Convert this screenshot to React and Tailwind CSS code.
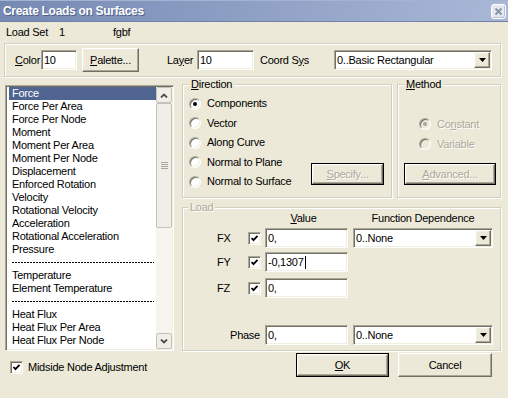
const sunken =
  'border border-[#aca899] border-b-white border-r-white shadow-[inset_1px_1px_0_#716f64,inset_-1px_-1px_0_#f1efe2]'
const raised =
  'border border-white border-b-[#716f64] border-r-[#716f64] shadow-[inset_-1px_-1px_0_#aca899,inset_1px_1px_0_#f1efe2]'
const etched = 'border border-[#d0d0bf] shadow-[inset_1px_1px_0_#fff,1px_1px_0_#fff]'
const grayText = 'text-[#aca899] [text-shadow:1px_1px_0_#fff]'

const loadTypes = [
  'Force',
  'Force Per Area',
  'Force Per Node',
  'Moment',
  'Moment Per Area',
  'Moment Per Node',
  'Displacement',
  'Enforced Rotation',
  'Velocity',
  'Rotational Velocity',
  'Acceleration',
  'Rotational Acceleration',
  'Pressure',
  '-',
  'Temperature',
  'Element Temperature',
  '-',
  'Heat Flux',
  'Heat Flux Per Area',
  'Heat Flux Per Node',
  'Heat Generation'
]

export default function App() {
  return (
    <div className="h-[398px] w-[508px] overflow-hidden bg-[#ece9d8] font-['Liberation_Sans',Arial,sans-serif] text-[11px] leading-[13px] tracking-[-0.25px] text-black">
      <TitleBar />

      <div className="flex h-[21px] items-center pl-[6px]">
        <span className="w-[53px]">Load Set</span>
        <span className="w-[54px]">1</span>
        <span>fgbf</span>
      </div>

      <div className={`ml-[4px] flex h-[34px] w-[497px] items-center pl-[10px] ${etched}`}>
        <span className="w-[26px]">
          <u>C</u>olor
        </span>
        <TextBox value="10" className="w-[36px]" />
        <Button className="ml-[5px] h-[24px] w-[57px]">
          <u>P</u>alette...
        </Button>
        <span className="ml-[28px] w-[30px]">
          La<u>y</u>er
        </span>
        <TextBox value="10" className="w-[57px]" />
        <span className="ml-[6px] w-[74px]">
          Coord S<u>y</u>s
        </span>
        <Combo value="0..Basic Rectangular" className="w-[158px]" />
      </div>

      <div className="flex pl-[5px] pt-[8px]">
        <div className="flex w-[169px] flex-col">
          <LoadList />
          <div className="mt-[10px] flex items-center pl-[5px]">
            <Checkbox />
            <span className="ml-[5px]">Midside Node Adjustment</span>
          </div>
        </div>

        <div className="-mt-[7px] ml-[8px] flex w-[319px] flex-col">
          <div className="flex">
            <Group label={<><u>D</u>irection</>} className="h-[120px] w-[210px]">
              <div className="flex">
                <div className="flex flex-col pl-[6px] pt-[3px]">
                  {['Components', 'Vector', 'Along Curve', 'Normal to Plane', 'Normal to Surface'].map(
                    (t, i) => (
                      <div key={t} className="flex h-[19.5px] items-center">
                        <Radio checked={i === 0} />
                        <span className="ml-[6px]">{t}</span>
                      </div>
                    )
                  )}
                </div>
                <Button dark disabled className="ml-auto mr-[7px] mt-[72px] h-[22px] w-[73px]">
                  <u>S</u>pecify...
                </Button>
              </div>
            </Group>

            <Group label={<><u>M</u>ethod</>} className="ml-[5px] h-[120px] w-[104px]">
              <div className="flex flex-col pl-[21px] pt-[23px]">
                <div className="flex h-[20px] items-center">
                  <Radio checked disabled />
                  <span className={`ml-[6px] ${grayText}`}>
                    Co<u>n</u>stant
                  </span>
                </div>
                <div className="flex h-[20px] items-center">
                  <Radio disabled />
                  <span className={`ml-[6px] ${grayText}`}>Variable</span>
                </div>
              </div>
              <Button dark disabled className="ml-[6px] mt-[9px] h-[22px] w-[92px]">
                <u>A</u>dvanced...
              </Button>
            </Group>
          </div>

          <Group label="Load" disabledLabel legendClass="ml-[5px]" className="mt-[3px] h-[150px] w-full">
            <div className="-mt-[2px] flex h-[13px] items-center">
              <span className="w-[82px]" />
              <span className="w-[77px] text-center">
                <u>V</u>alue
              </span>
              <span className="ml-[11px] w-[140px] text-center">Function Dependence</span>
            </div>
            <ComponentRow label="FX" value="0," combo className="mt-[3px]" />
            <ComponentRow label="FY" value="-0,1307" caret className="mt-[4px]" />
            <ComponentRow label="FZ" value="0," className="mt-[6px]" />
            <div className="mt-[27px] flex h-[20px] items-center">
              <span className="w-[77px] text-right">Phase</span>
              <TextBox value="0," className="ml-[5px] w-[83px]" />
              <Combo value="0..None" className="ml-[5px] w-[140px]" />
            </div>
          </Group>

          <div className="mt-[2px] flex justify-end pr-[9px]">
            <Button dark className="h-[24px] w-[93px]">
              <u>O</u>K
            </Button>
            <Button className="ml-[9px] h-[24px] w-[94px]">Cancel</Button>
          </div>
        </div>
      </div>
    </div>
  )
}

function TitleBar() {
  return (
    <div className="flex h-[22px] items-center justify-between bg-linear-to-r from-[#7689b3] to-[#a9b8d7] pl-[3px] pr-[2px] shadow-[inset_0_1px_0_#a4b3d2,inset_0_-1px_0_#6f82ab]">
      <span className="text-[12px] font-bold tracking-[-0.3px] text-white [text-shadow:1px_1px_0_#50618a]">
        Create Loads on Surfaces
      </span>
      <div className="flex h-[15px] w-[15px] items-center justify-center rounded-[3px] border border-white bg-[#e4e8f1] shadow-[inset_-1px_-1px_0_#b5bdcf]">
        <svg width="9" height="9" viewBox="0 0 9 9">
          <path d="M1.5 1.5 L7.5 7.5 M7.5 1.5 L1.5 7.5" stroke="#8a93a8" strokeWidth="2" />
        </svg>
      </div>
    </div>
  )
}

function Group({ label, disabledLabel, legendClass = 'ml-[6px]', className = '', children }) {
  return (
    <fieldset className={`${etched} ${className}`}>
      <legend
        className={`${legendClass} bg-[#ece9d8] px-[2px] leading-[13px] ${disabledLabel ? grayText : ''}`}
      >
        {label}
      </legend>
      {children}
    </fieldset>
  )
}

function TextBox({ value, caret, className = '' }) {
  return (
    <div className={`flex h-[20px] shrink-0 items-center bg-white px-[2px] ${sunken} ${className}`}>
      <span>{value}</span>
      {caret && <span className="ml-[1px] h-[13px] w-[1px] bg-black" />}
    </div>
  )
}

function Combo({ value, className = '' }) {
  return (
    <div className={`flex h-[20px] shrink-0 items-center bg-white pl-[2px] ${sunken} ${className}`}>
      <span className="flex-1">{value}</span>
      <div className={`m-[1px] flex h-[16px] w-[16px] items-center justify-center bg-[#ece9d8] ${raised}`}>
        <svg width="7" height="4" viewBox="0 0 7 4">
          <path d="M0 0h7L3.5 4z" fill="#000" />
        </svg>
      </div>
    </div>
  )
}

function Button({ dark, disabled, className = '', children }) {
  const inner = (
    <div
      className={`flex h-full w-full items-center justify-center bg-[#ece9d8] ${raised} ${
        disabled ? grayText : ''
      }`}
    >
      <span>{children}</span>
    </div>
  )
  if (dark) {
    return <div className={`shrink-0 border border-black ${className}`}>{inner}</div>
  }
  return <div className={`shrink-0 ${className}`}>{inner}</div>
}

function Radio({ checked, disabled }) {
  return (
    <span
      className={`flex h-[12px] w-[12px] shrink-0 items-center justify-center rounded-full border border-[#aca899] border-b-white border-r-white shadow-[inset_1px_1px_0_#716f64,inset_-1px_-1px_0_#f1efe2] ${
        disabled ? 'bg-[#ece9d8]' : 'bg-white'
      }`}
    >
      {checked && (
        <span className={`h-[4px] w-[4px] rounded-full ${disabled ? 'bg-[#aca899]' : 'bg-black'}`} />
      )}
    </span>
  )
}

function Checkbox() {
  return (
    <span className={`flex h-[13px] w-[13px] shrink-0 items-center justify-center bg-white ${sunken}`}>
      <svg width="9" height="9" viewBox="0 0 9 9">
        <path d="M1.5 4 L3.5 6.2 L7.5 1.8" fill="none" stroke="#000" strokeWidth="1.8" />
      </svg>
    </span>
  )
}

function ComponentRow({ label, value, combo, caret, className = '' }) {
  return (
    <div className={`flex h-[20px] items-center ${className}`}>
      <span className="ml-[34px] w-[31px]">{label}</span>
      <Checkbox />
      <TextBox value={value} caret={caret} className="ml-[4px] w-[83px]" />
      {combo && <Combo value="0..None" className="ml-[5px] w-[140px]" />}
    </div>
  )
}

function LoadList() {
  return (
    <div className={`flex h-[266px] bg-white ${sunken} border-[1px] p-[1px]`}>
      <div className="flex-1 overflow-hidden pl-[2px]">
        {loadTypes.map((t, i) =>
          t === '-' ? (
            <div key={i} className="flex h-[13px] items-center pl-[3px] pr-[2px]">
              <div className="h-[1px] w-full bg-[repeating-linear-gradient(90deg,#000_0px,#000_2px,transparent_2px,transparent_3px)]" />
            </div>
          ) : (
            <div
              key={i}
              className={`h-[13px] whitespace-nowrap pl-[3px] ${i === 0 ? 'bg-[#4f6490] text-white' : ''}`}
            >
              {t}
            </div>
          )
        )}
      </div>
      <ScrollBar />
    </div>
  )
}

function ScrollBar() {
  return (
    <div className="flex w-[16px] shrink-0 flex-col bg-[#f6f5f0]">
      <ScrollButton up />
      <div className="flex h-[125px] items-center justify-center rounded-[2px] border border-[#c3c2b8] bg-[#efeee7]">
        <div className="flex flex-col gap-[1px]">
          <span className="h-[1px] w-[7px] bg-[#a8a79c]" />
          <span className="h-[1px] w-[7px] bg-[#a8a79c]" />
          <span className="h-[1px] w-[7px] bg-[#a8a79c]" />
          <span className="h-[1px] w-[7px] bg-[#a8a79c]" />
        </div>
      </div>
      <div className="flex-1" />
      <ScrollButton />
    </div>
  )
}

function ScrollButton({ up }) {
  return (
    <div className="flex h-[16px] items-center justify-center rounded-[2px] border border-[#c3c2b8] bg-[#efeee7]">
      <svg width="8" height="5" viewBox="0 0 8 5">
        <path
          d={up ? 'M1 4.5 L4 1.5 L7 4.5' : 'M1 0.5 L4 3.5 L7 0.5'}
          fill="none"
          stroke="#4d4d4d"
          strokeWidth="1.8"
        />
      </svg>
    </div>
  )
}
